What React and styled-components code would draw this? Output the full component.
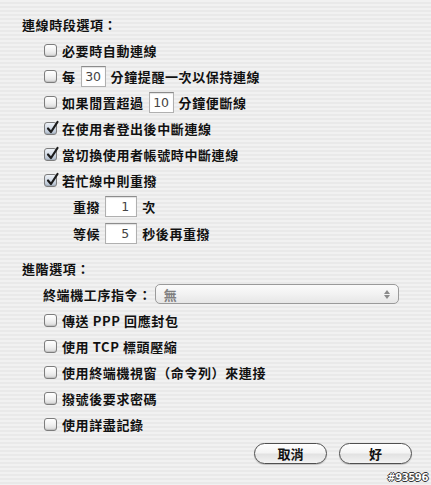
import React from "react";
import styled, { createGlobalStyle } from "styled-components";

const GlobalStyle = createGlobalStyle`
  html, body {
    margin: 0;
    padding: 0;
  }
  body {
    width: 431px;
    height: 485px;
    overflow: hidden;
    background: repeating-linear-gradient(
      to bottom,
      #f1f1f1 0px,
      #f1f1f1 2px,
      #e9e9e9 2px,
      #e9e9e9 4px
    );
    font-family: "Noto Sans CJK TC", "Noto Sans", sans-serif;
    font-size: 13px;
    color: #111;
  }
`;

const Panel = styled.div`
  position: relative;
  width: 431px;
  height: 485px;
  box-sizing: border-box;
  padding-top: 11px;
  display: flex;
  flex-direction: column;
`;

const Row = styled.div`
  height: ${(p) => p.$h || 26}px;
  display: flex;
  align-items: center;
  padding-left: ${(p) => p.$indent || 0}px;
  margin-top: ${(p) => p.$mt || 0}px;
  white-space: nowrap;
`;

const Label = styled.span`
  font-weight: 700;
  letter-spacing: 0.6px;
`;

const Box = styled.span`
  width: 13px;
  height: 13px;
  box-sizing: border-box;
  border: 1px solid #7d7d7d;
  border-radius: 3px;
  margin-right: 5px;
  position: relative;
  flex: none;
  background: ${(p) =>
    p.$checked
      ? "linear-gradient(to bottom, #eef2f7 0%, #cdd6e2 60%, #b4c0cf 100%)"
      : "linear-gradient(to bottom, #ffffff 0%, #f0f0f0 55%, #d9d9d9 100%)"};
  box-shadow: inset 0 -1px 1px rgba(0, 0, 0, 0.12);

  svg {
    position: absolute;
    left: 0px;
    top: -3px;
  }
`;

const Field = styled.span`
  width: ${(p) => p.$w}px;
  height: 21px;
  box-sizing: border-box;
  margin: 0 5px 0 5px;
  background: #fff;
  border: 1px solid #b0b0b0;
  border-top-color: #8c8c8c;
  box-shadow: inset 0 1px 1px rgba(0, 0, 0, 0.12);
  display: flex;
  align-items: center;
  justify-content: ${(p) => (p.$right ? "flex-end" : "center")};
  padding-right: ${(p) => (p.$right ? 7 : 0)}px;
  font-family: "DejaVu Sans", "Liberation Sans", sans-serif;
  font-size: 12.5px;
  color: #444;
`;

const Popup = styled.div`
  margin-left: 3px;
  width: 244px;
  height: 20px;
  box-sizing: border-box;
  border: 1px solid #9a9a9a;
  border-radius: 5px;
  background: linear-gradient(to bottom, #fbfbfb 0%, #f2f2f2 50%, #e6e6e6 100%);
  display: flex;
  align-items: center;
  justify-content: space-between;
  padding: 0 8px 0 8px;
  color: #808080;
  font-weight: 700;
`;

const Arrows = styled.span`
  display: flex;
  flex-direction: column;
  align-items: center;
  gap: 1px;
`;

const Buttons = styled.div`
  display: flex;
  justify-content: flex-end;
  gap: 12px;
  padding-right: 19px;
  margin-top: 6px;
`;

const Button = styled.button`
  width: 73px;
  height: 21px;
  border: 1px solid #4f4f4f;
  border-radius: 11px;
  background: linear-gradient(to bottom, #ffffff 0%, #f4f4f4 45%, #e2e2e2 55%, #f3f3f3 100%);
  box-shadow: 0 1px 1px rgba(0, 0, 0, 0.2);
  font-family: "Noto Sans CJK TC", sans-serif;
  font-size: 13px;
  font-weight: 700;
  color: #111;
  padding: 0;
  display: flex;
  align-items: center;
  justify-content: center;
`;

const Watermark = styled.div`
  position: absolute;
  right: 3px;
  bottom: 2px;
  font-family: "DejaVu Sans", sans-serif;
  font-weight: 700;
  font-size: 10px;
  letter-spacing: -0.4px;
  color: #fff;
  text-shadow: -1px 0 #333, 1px 0 #333, 0 -1px #333, 0 1px #333;
`;

const Check = ({ checked }) => (
  <Box $checked={checked}>
    {checked && (
      <svg width="15" height="15" viewBox="0 0 15 15">
        <path
          d="M3 8.5 L6 12 L12.5 2"
          fill="none"
          stroke="#1c1c1c"
          strokeWidth="2.2"
          strokeLinecap="round"
          strokeLinejoin="round"
        />
      </svg>
    )}
  </Box>
);

const CheckRow = ({ checked, children }) => (
  <Row $indent={44}>
    <Check checked={checked} />
    {children}
  </Row>
);

const advanced = [
  "傳送 PPP 回應封包",
  "使用 TCP 標頭壓縮",
  "使用終端機視窗（命令列）來連接",
  "撥號後要求密碼",
  "使用詳盡記錄",
];

export default function App() {
  return (
    <>
      <GlobalStyle />
      <Panel>
        <Row $indent={22}>
          <Label>連線時段選項：</Label>
        </Row>
        <CheckRow>
          <Label>必要時自動連線</Label>
        </CheckRow>
        <CheckRow>
          <Label>每</Label>
          <Field $w={25}>30</Field>
          <Label>分鐘提醒一次以保持連線</Label>
        </CheckRow>
        <CheckRow>
          <Label>如果閒置超過</Label>
          <Field $w={25}>10</Field>
          <Label>分鐘便斷線</Label>
        </CheckRow>
        <CheckRow checked>
          <Label>在使用者登出後中斷連線</Label>
        </CheckRow>
        <CheckRow checked>
          <Label>當切換使用者帳號時中斷連線</Label>
        </CheckRow>
        <CheckRow checked>
          <Label>若忙線中則重撥</Label>
        </CheckRow>
        <Row $indent={73}>
          <Label>重撥</Label>
          <Field $w={32} $right>1</Field>
          <Label>次</Label>
        </Row>
        <Row $indent={73} $h={28}>
          <Label>等候</Label>
          <Field $w={32} $right>5</Field>
          <Label>秒後再重撥</Label>
        </Row>

        <Row $indent={22} $mt={8}>
          <Label>進階選項：</Label>
        </Row>
        <Row $indent={43}>
          <Label>終端機工序指令：</Label>
          <Popup>
            <span>無</span>
            <Arrows>
              <svg width="6" height="4" viewBox="0 0 6 4">
                <path d="M0 4 L3 0 L6 4 Z" fill="#8a8a8a" />
              </svg>
              <svg width="6" height="4" viewBox="0 0 6 4">
                <path d="M0 0 L3 4 L6 0 Z" fill="#8a8a8a" />
              </svg>
            </Arrows>
          </Popup>
        </Row>
        {advanced.map((t) => (
          <CheckRow key={t}>
            <Label>{t}</Label>
          </CheckRow>
        ))}

        <Buttons>
          <Button>取消</Button>
          <Button>好</Button>
        </Buttons>
        <Watermark>#93596</Watermark>
      </Panel>
    </>
  );
}
